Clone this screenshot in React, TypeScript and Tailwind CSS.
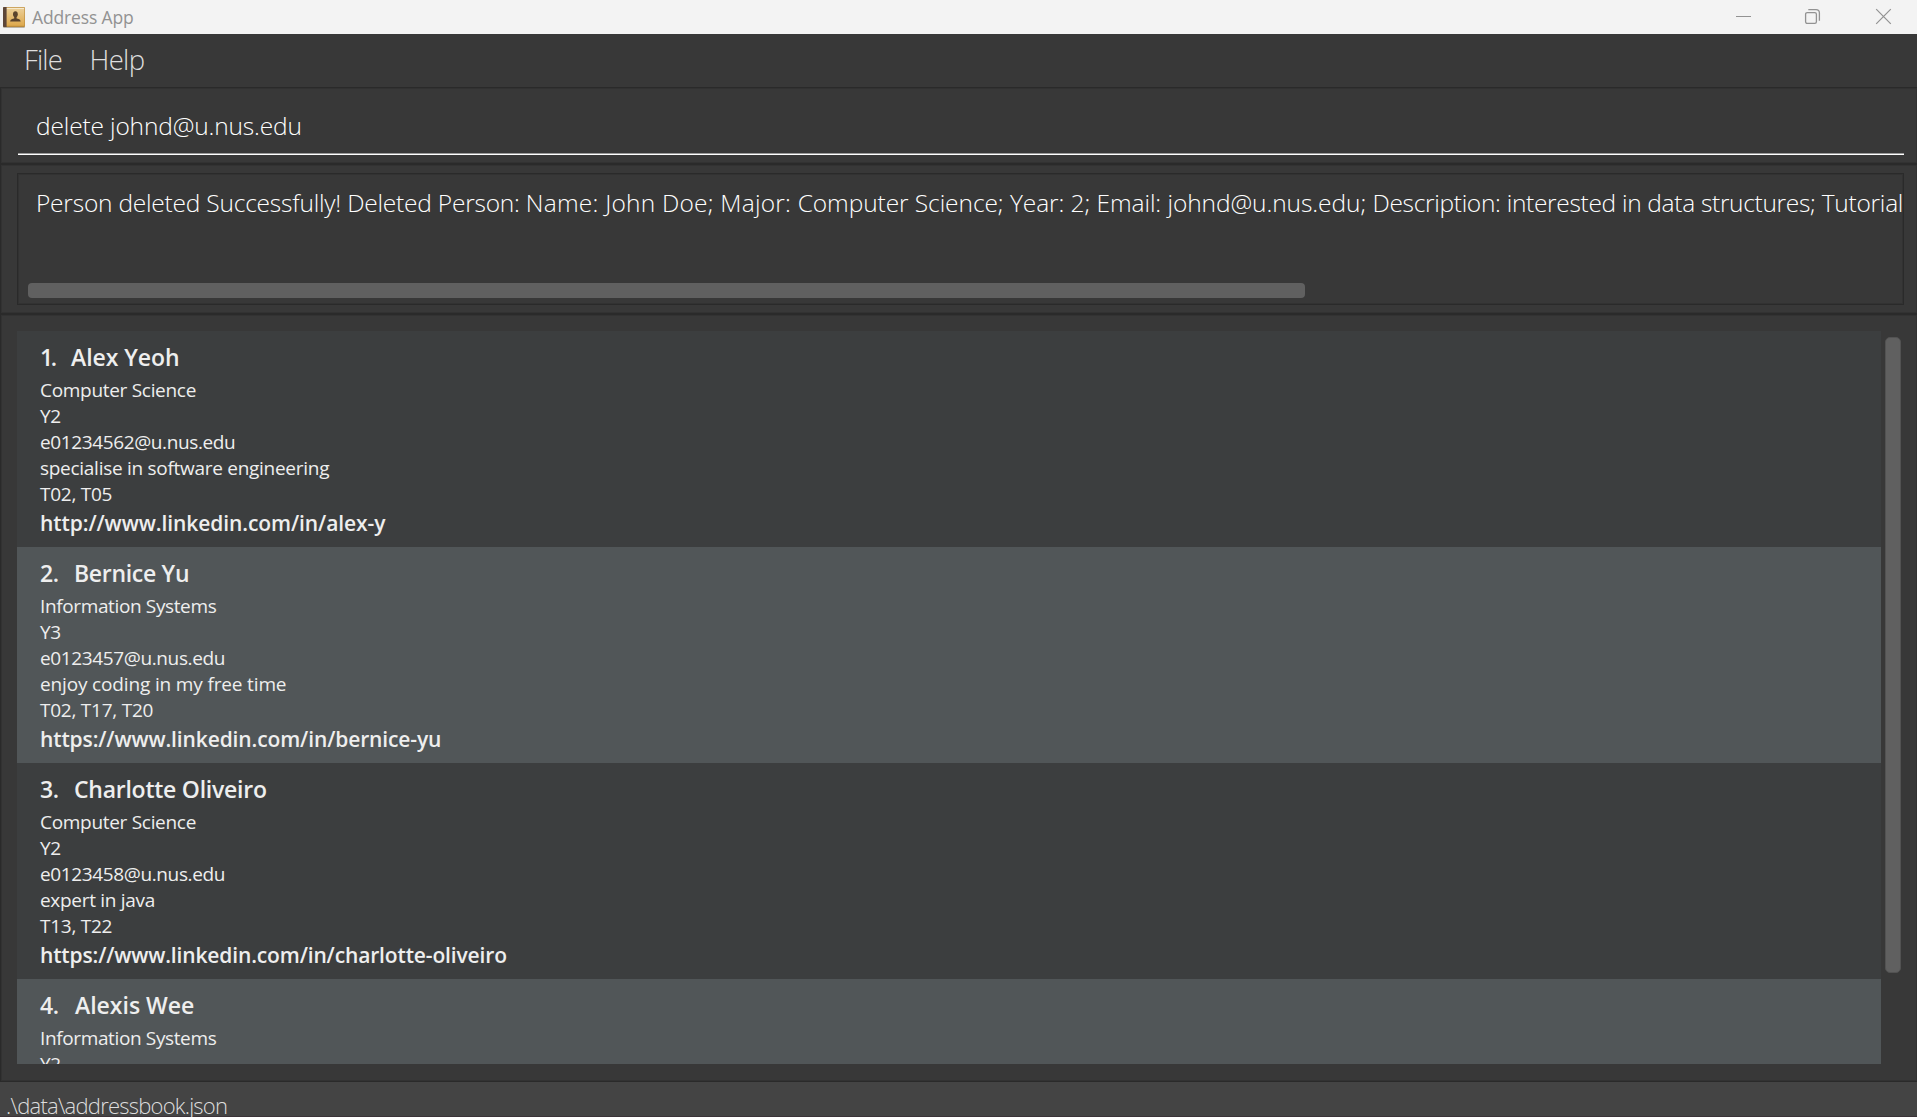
type Line = { text: string; tracking: string };

type Person = {
  index: Line;
  indexWidth: string;
  name: Line;
  details: Line[];
  link?: Line;
};

const people: Person[] = [
  {
    index: { text: '1.', tracking: 'tracking-[-2.5px]' },
    indexWidth: 'w-[31px]',
    name: { text: 'Alex Yeoh', tracking: 'tracking-[-0.06px]' },
    details: [
      { text: 'Computer Science', tracking: 'tracking-[-0.3px]' },
      { text: 'Y2', tracking: 'tracking-[-0.3px]' },
      { text: 'e01234562@u.nus.edu', tracking: 'tracking-[-0.38px]' },
      { text: 'specialise in software engineering', tracking: 'tracking-[-0.28px]' },
      { text: 'T02, T05', tracking: 'tracking-[-0.25px]' },
    ],
    link: { text: 'http://www.linkedin.com/in/alex-y', tracking: 'tracking-[-0.08px]' },
  },
  {
    index: { text: '2.', tracking: 'tracking-[-0.3px]' },
    indexWidth: 'w-[34px]',
    name: { text: 'Bernice Yu', tracking: 'tracking-[-0.3px]' },
    details: [
      { text: 'Information Systems', tracking: 'tracking-[-0.37px]' },
      { text: 'Y3', tracking: 'tracking-[-0.3px]' },
      { text: 'e0123457@u.nus.edu', tracking: 'tracking-[-0.37px]' },
      { text: 'enjoy coding in my free time', tracking: 'tracking-[-0.15px]' },
      { text: 'T02, T17, T20', tracking: 'tracking-[-0.24px]' },
    ],
    link: { text: 'https://www.linkedin.com/in/bernice-yu', tracking: 'tracking-[-0.12px]' },
  },
  {
    index: { text: '3.', tracking: 'tracking-[-0.3px]' },
    indexWidth: 'w-[34px]',
    name: { text: 'Charlotte Oliveiro', tracking: 'tracking-[-0.25px]' },
    details: [
      { text: 'Computer Science', tracking: 'tracking-[-0.3px]' },
      { text: 'Y2', tracking: 'tracking-[-0.3px]' },
      { text: 'e0123458@u.nus.edu', tracking: 'tracking-[-0.37px]' },
      { text: 'expert in java', tracking: 'tracking-[-0.3px]' },
      { text: 'T13, T22', tracking: 'tracking-[-0.25px]' },
    ],
    link: { text: 'https://www.linkedin.com/in/charlotte-oliveiro', tracking: 'tracking-[-0.14px]' },
  },
  {
    index: { text: '4.', tracking: 'tracking-[-0.3px]' },
    indexWidth: 'w-[35px]',
    name: { text: 'Alexis Wee', tracking: 'tracking-normal' },
    details: [
      { text: 'Information Systems', tracking: 'tracking-[-0.37px]' },
      { text: 'Y2', tracking: 'tracking-[-0.3px]' },
    ],
  },
];

const result: Line[] = [
  { text: 'Person deleted Successfully! Deleted Person: ', tracking: 'tracking-[-0.214px]' },
  { text: 'Name: John Doe; Major: ', tracking: 'tracking-[0.22px]' },
  { text: 'Computer Science; Year: 2; Email: johnd@u.nus.edu; ', tracking: 'tracking-[-0.075px]' },
  { text: 'Description: interested in data structures; ', tracking: 'tracking-[-0.31px]' },
  { text: 'Tutorial', tracking: 'tracking-[-0.25px]' },
];

const pane = 'border border-r-0 border-[#2a2a2a] shadow-[inset_0_0_0_1px_#323232]';

function AppIcon() {
  return (
    <svg width="24" height="24" viewBox="0 0 24 24" className="shrink-0">
      <defs>
        <linearGradient id="cover" x1="0" y1="0" x2="0" y2="1">
          <stop offset="0" stopColor="#ecd09a" />
          <stop offset="1" stopColor="#dda84c" />
        </linearGradient>
      </defs>
      <rect x="1" y="2.5" width="22" height="20.5" rx="1.2" fill="#b9b3a8" />
      <rect x="1" y="2" width="22" height="20" rx="1.2" fill="#b98a3c" />
      <rect x="4" y="2.6" width="18.4" height="18.2" fill="url(#cover)" />
      <rect x="4" y="3" width="18" height="0.9" fill="#f8ecd2" />
      <path d="M2 2h2.6v20H2a1 1 0 0 1-1-1V3a1 1 0 0 1 1-1z" fill="#5d4638" />
      <ellipse cx="13.4" cy="9.2" rx="2.4" ry="3" fill="#5a432c" />
      <path d="M12.2 11h2.4v2.6c1.600.5 3.800.7 4.100 2.900H8.100c.3-2.200 2.500-2.400 4.100-2.900z" fill="#5a432c" />
    </svg>
  );
}

function TitleBar() {
  return (
    <header className="flex h-[34px] shrink-0 items-start justify-between bg-[#f3f3f3]">
      <div className="flex pl-[2px] pt-[5px]">
        <AppIcon />
        <span className="ml-[6px] text-[17.5px] leading-6 tracking-[-0.15px] text-[#929292]">Address App</span>
      </div>
      <div className="flex pr-[25px] pt-2 text-[#929292]">
        <svg width="17" height="17" viewBox="0 0 17 17" fill="none" stroke="currentColor" className="mr-[52px]">
          <path d="M1 8.500H16" />
        </svg>
        <svg
          width="17"
          height="17"
          viewBox="0 0 17 17"
          fill="none"
          stroke="currentColor"
          strokeWidth="1.300"
          className="mr-[54px]"
        >
          <rect x="1.600" y="4.600" width="10.800" height="10.800" rx="1.600" />
          <path d="M4.300 1.700H12a3.400 3.400 0 0 1 3.400 3.400V12.700" />
        </svg>
        <svg width="17" height="17" viewBox="0 0 17 17" fill="none" stroke="currentColor" strokeWidth="1.200">
          <path d="M1.200 1.200l14.600 14.600M15.800 1.200L1.200 15.800" />
        </svg>
      </div>
    </header>
  );
}

function PersonCard({ person, shaded }: { person: Person; shaded: boolean }) {
  return (
    <li
      className={`h-[216px] shrink-0 pl-[23px] pt-[10px] text-[#eeeeee] ${shaded ? 'bg-[#515658]' : 'bg-[#3c3e3f]'}`}
    >
      <div className="flex h-9 text-[23px] font-semibold leading-8">
        <span className={`shrink-0 ${person.index.tracking} ${person.indexWidth}`}>{person.index.text}</span>
        <span className={person.name.tracking}>{person.name.text}</span>
      </div>
      {person.details.map((line) => (
        <p key={line.text} className={`text-[19px] leading-[26px] ${line.tracking}`}>
          {line.text}
        </p>
      ))}
      {person.link && (
        <p className={`mt-px text-[21px] font-semibold leading-[30px] ${person.link.tracking}`}>{person.link.text}</p>
      )}
    </li>
  );
}

export default function App() {
  return (
    <div className="flex h-[1117px] w-[1917px] flex-col overflow-hidden whitespace-nowrap bg-[#383838] font-['Open_Sans','Noto_Sans',sans-serif]">
      <TitleBar />
      <nav className="flex h-[53px] shrink-0 pl-6 pt-[6px] text-[27.5px] font-light leading-10 text-[#dedede]">
        <span className="w-[65.500px] tracking-[-0.85px]">File</span>
        <span className="tracking-[-0.65px]">Help</span>
      </nav>

      <section className={`h-[77px] shrink-0 pl-[17px] pr-[13px] ${pane}`}>
        <div className="h-[67px] border-b border-white pl-[18px] pt-[18px] text-[24.5px] font-light leading-[40px] tracking-[-0.15px] text-white shadow-[inset_0_-1px_0_#999999]">
          delete johnd@u.nus.edu
        </div>
      </section>

      <section className={`h-[150px] shrink-0 pl-4 pr-[13px] pt-2 ${pane}`}>
        <div className="flex h-[132px] flex-col justify-between overflow-hidden border border-[#2a2a2a] pb-[6px] pl-[10px] pt-[9px] shadow-[inset_0_0_0_1px_#323232]">
          <p className="whitespace-pre pl-2 text-[24.5px] font-light leading-10 text-white">
            {result.map((part) => (
              <span key={part.text} className={part.tracking}>
                {part.text}
              </span>
            ))}
          </p>
          <div className="h-[15px] w-[1277px] rounded-[4px] bg-[#606060]" />
        </div>
      </section>

      <main className={`flex h-[768px] shrink-0 pb-[17px] pl-4 pt-4 ${pane}`}>
        <ul className="flex w-[1864px] flex-col overflow-hidden">
          {people.map((person, i) => (
            <PersonCard key={person.index.text} person={person} shaded={i % 2 === 1} />
          ))}
        </ul>
        <div className="ml-1 mt-[6px] h-[636px] w-4 rounded-[5px] border border-[#525252] bg-[#606060]" />
      </main>

      <footer className="h-[35px] shrink-0 border-b border-[#3b3338] bg-[#444444] pl-[6px] pt-[3px] text-[22px] font-light leading-[40px] tracking-[-0.77px] text-[#dddddd]">
        .\data\addressbook.json
      </footer>
    </div>
  );
}
